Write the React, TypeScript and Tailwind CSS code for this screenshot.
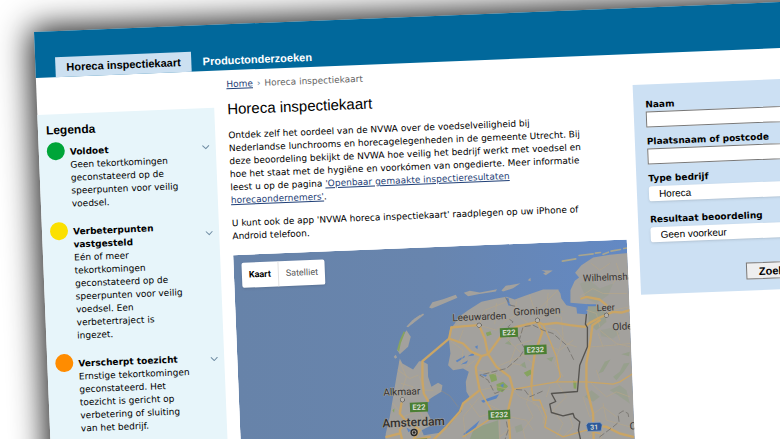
import { ChevronDown } from 'lucide-react';

const legend = [
  {
    title: 'Voldoet',
    dot: 'bg-[#00a539]',
    text: 'Geen tekortkomingen geconstateerd op de speerpunten voor veilig voedsel.'
  },
  {
    title: 'Verbeterpunten vastgesteld',
    dot: 'bg-[#fbe000]',
    text: 'Eén of meer tekortkomingen geconstateerd op de speerpunten voor veilig voedsel. Een verbetertraject is ingezet.'
  },
  {
    title: 'Verscherpt toezicht',
    dot: 'bg-[#ff8c00]',
    text: 'Ernstige tekortkomingen geconstateerd. Het toezicht is gericht op verbetering of sluiting van het bedrijf.'
  }
];

const places = [
  { name: 'Leeuwarden', x: 158, y: 273, size: 30, dot: [238, 285] },
  { name: 'Groningen', x: 341, y: 256, size: 31, dot: [413, 270] },
  { name: 'Alkmaar', x: -49, y: 497, size: 30, dot: [8, 509] },
  { name: 'Leer', x: 591, y: 243, size: 28, dot: [620, 255] },
  { name: 'Wilhelmshaven', x: 550, y: 154, size: 29 },
  { name: 'Oldenburg', x: 638, y: 300, size: 30 },
  { name: 'Cloppenburg', x: 690, y: 598, size: 30 }
];

const shields = [
  { name: 'E22', x: 300, y: 294, w: 54 },
  { name: 'E232', x: 373, y: 346, w: 67 },
  { name: 'E22', x: 30, y: 518, w: 54 },
  { name: 'E232', x: 265, y: 541, w: 66 }
];

const MapView = () => (
  <svg className="block h-full w-full" role="img" aria-label="Kaart van Noord-Nederland">
    <defs>
      <linearGradient id="sea" x1="0" x2="1">
        <stop offset="0" stopColor="#6783a9" />
        <stop offset="0.5" stopColor="#6885ae" />
        <stop offset="1" stopColor="#6389c4" />
      </linearGradient>
    </defs>
    <rect width="100%" height="100%" fill="url(#sea)" />
    <g transform="rotate(2.3) scale(0.3333) translate(500 -75)" strokeLinecap="round" strokeLinejoin="round">
      {/* land */}
      <g fill="#a3a19d">
        <path d="M148 335L150 300L165 280L175 262L205 240L245 215L290 205L320 200L345 208L380 195L430 178L475 178L482 190L485 205L500 225L530 232L532 250L562 253L565 222L512 218L512 180L525 152L538 142L526 128L545 105L580 82L630 74L690 68L760 60L760 700L-50 700L-42 610L-30 560L-20 500L-10 440L0 385L8 400L40 418L58 393L68 393L84 402L85 440L95 470L115 458L128 465L125 485L100 500L85 510L80 540L92 565L95 585L66 600L72 615L120 608L145 590L165 565L185 545L188 520L212 505L200 485L198 455L207 425L190 415L160 420L145 405L152 370Z" />
        <path d="M20 300L33 320L25 350L0 372L-7 360L5 325Z" />
        <path d="M20 290L45 265L70 250L73 254L46 275L25 291Z" />
        <path d="M88 232L98 216L130 207L168 194L173 203L120 225L96 235Z" />
        <path d="M192 188L210 182L240 187L292 177L288 184L235 192L205 198Z" />
        <path d="M305 181L318 167L362 159L340 174L310 184Z" />
        <path d="M384 150L392 143L393 153Z" />
        <path d="M425 120L459 121L438 135L430 130L438 126Z" />
        <path d="M-18 380L-12 374L-8 382L-14 386Z" />
        <path d="M20 290L38 270L62 253L58 262L38 280Z" />
      </g>
      <g fill="none" stroke="#a8a58e" strokeWidth="5">
        <path d="M488 93L528 86" />
        <path d="M538 76L580 71M587 69L602 67M610 72L626 66M634 63L662 58M672 55L700 51" />
      </g>
      {/* woods and parks */}
      <g fill="#929f86">
        <path d="M565 222L612 232L620 275L590 300L567 280Z" opacity="0.6" />
        <path d="M540 160L570 150L600 175L640 160L625 195L590 220L560 205Z" opacity="0.3" />
        <path d="M600 300L640 292L660 310L640 325L605 318Z" opacity="0.3" />
        <path d="M220 602L250 585L295 570L298 627L205 640Z" />
        <path d="M640 440L660 425L672 400L690 398L672 425L650 450Z" opacity="0.7" />
        <path d="M596 430L615 395L632 388L610 425ZM665 372L690 365L688 378Z" opacity="0.8" />
        <path d="M630 480L660 465L680 480L690 520L655 495Z" opacity="0.5" />
        <path d="M360 405L375 395L380 415ZM440 385L462 380L455 395ZM315 340L330 330L335 345Z" />
        <path d="M555 500L575 480L600 500L580 515ZM345 590L365 582L370 600L350 608Z" opacity="0.6" />
      </g>
      <g fill="#86a35f">
        <path d="M12 303L16 306L3 340L-2 365L-8 358L0 330Z" />
        <path d="M268 434L288 430L292 450L275 456ZM290 462L310 455L325 468L308 486L292 480Z" />
        <path d="M372 428L392 418L398 430L382 440ZM258 308L272 303L276 313L262 318Z" />
        <path d="M520 450L530 455L530 476L522 475ZM-22 540L-16 535L-17 548Z" />
      </g>
      {/* lakes */}
      <g fill="#5d85c0">
        <path d="M168 392L196 376L194 382L172 396ZM183 403L205 390L200 400ZM204 378L225 365L222 376ZM225 350L234 345L233 357Z" />
        <path d="M318 202L327 205L330 222L340 228L326 226ZM302 465L312 460L310 473ZM244 512L298 492L290 505L250 518Z" />
        <path d="M190 612L240 570L228 592L200 615ZM240 432L262 434L258 440ZM20 592L34 600L26 606ZM562 222L590 222L588 228L565 228Z" />
      </g>
      {/* secondary roads */}
      <g fill="none" stroke="#b5a68a" strokeWidth="2">
        <path d="M165 290L200 262L238 285L255 240L320 215M175 340L190 300M238 285L290 300L320 270L360 250L413 240L475 180" />
        <path d="M390 195L413 270L450 250L485 260L490 320L465 400L490 440" />
        <path d="M425 290L470 300L500 340L530 350M413 270L380 290L350 320L320 325L365 370L400 400" />
        <path d="M150 330L190 360L185 400M240 380L200 410M265 372L290 410L360 380L400 360M235 420L270 425L300 440L340 400L365 405" />
        <path d="M240 480L290 470L340 480M240 480L260 520L300 540L300 640M340 480L360 500L410 520L440 580" />
        <path d="M395 470L380 520L400 560L370 600L380 640M470 455L500 500L460 540L490 580L470 620" />
        <path d="M290 220L285 280M350 215L345 250L400 290M205 250L230 270M445 190L440 240L490 245" />
        <path d="M395 330L350 345L330 400M430 340L480 360L520 330M240 500L190 560L200 640M210 520L240 560L290 545" />
        <path d="M-5 420L30 445L55 435M5 460L40 470L25 490M0 395L20 440L0 500M-20 520L10 560L60 540L75 580M60 440L70 480L100 480" />
        <path d="M600 300L650 340L690 350M575 350L640 345L690 340M600 450L590 420M610 350L595 310M640 160L660 130L650 100M560 240L590 250L600 290" />
        <path d="M575 460L620 500L650 485L690 500M550 500L570 560L610 530L650 560M600 570L570 620M610 520L620 570L690 590M610 590L600 640" />
        <path d="M630 100L600 120L575 100M540 200L580 175L610 190L680 190M640 240L690 230M660 330L650 300" />
        <path d="M440 500L450 470M400 520L440 540L430 580M510 560L520 590L490 620M330 560L380 570L400 600M340 590L300 620" />
        <path d="M125 482L150 497L175 530" stroke="#8d8b88" />
      </g>
      {/* main roads */}
      <g fill="none" stroke="#c9a566" strokeWidth="7">
        <path d="M155 292L195 288L238 285L255 325L265 372L290 410L330 440L340 478L325 540L332 640" />
        <path d="M155 292L148 325L68 393L68 450L72 490L85 512" />
        <path d="M148 325L190 340L215 365L245 378L265 372L310 310L350 290L413 275L430 283L470 278L510 285L555 290L570 278L600 262L640 245L665 247L690 240" />
        <path d="M245 378L228 410L230 430L240 480L190 520L180 545L140 590L90 640" />
        <path d="M340 478L395 468L470 455L560 455L640 462L660 455L700 430" strokeWidth="4" />
        <path d="M413 275L428 305L405 370L398 420L395 468" />
        <path d="M430 283L450 330L470 380L482 440L470 455M420 510L440 560L435 590L490 620L560 600L600 610" strokeWidth="4" />
        <path d="M600 270L578 285L572 330L560 400L560 470L580 550L582 640M582 585L620 590L660 610L700 620" />
        <path d="M545 205L560 200L600 208L620 225M10 640L0 600L20 570L60 600L40 630L90 620M5 520L0 550L20 575M-40 620L0 610" />
        <path d="M395 468L400 510L420 510M240 480L275 540L280 560L190 620" strokeWidth="4" />
      </g>
      {/* borders */}
      <path d="M560 253L557 282L563 292L563 350L540 405L533 484L455 490L468 514L450 522L455 547L490 557L520 550L524 562L540 575L536 600L545 640" fill="none" stroke="#55534f" strokeWidth="4" />
      <path d="M318 203L332 225L345 228M330 268L340 275L325 290L360 325L370 290L400 285L430 300L460 310L500 345L525 395M355 322L375 355L360 380L320 415L280 425L240 435L265 450L285 490L310 480M350 478L375 480L390 500L435 480M320 575L325 600L312 640" fill="none" stroke="#7d7a75" strokeWidth="3" strokeDasharray="16 9" />
      <path d="M600 620L640 590L658 575L655 552L670 542L685 550L688 568" fill="none" stroke="#7d7a75" strokeWidth="3" strokeDasharray="16 9" />

      {/* road numbers */}
      <g fontFamily="Roboto, sans-serif" fontWeight="700" textAnchor="middle" fill="#d9ddd2">
        {shields.map((shield, idx) => (
          <g key={idx} transform={`translate(${shield.x} ${shield.y}) rotate(-2.3)`}>
            <rect width={shield.w} height="28" fill="#4a7f34" />
            <text x={shield.w / 2} y="22" fontSize="23">{shield.name}</text>
          </g>
        ))}
        <path d="M28 627L82 625L82 650L28 650Z" fill="#4a7f34" />
        <g transform="translate(559 578) rotate(-2.3)">
          <path d="M6 0L42 0L48 8L44 26L4 26L0 8Z" fill="#2d5a9b" stroke="#8fa3c0" strokeWidth="2" />
          <text x="24" y="21" fontSize="21">31</text>
        </g>
      </g>

      {/* places */}
      <g fontFamily="Roboto, sans-serif" fill="#33312f" stroke="#aaa6a0" strokeWidth="3" paintOrder="stroke">
        {places.map((place) => (
          <g key={place.name}>
            {place.dot && <circle cx={place.dot[0]} cy={place.dot[1]} r="6" fill="#b5b2ad" stroke="#44423f" />}
            <text fontSize={place.size} transform={`translate(${place.x} ${place.y}) rotate(-2.3)`}>{place.name}</text>
          </g>
        ))}
        <text fontSize="36" fontWeight="500" transform="translate(-52 592) rotate(-2.3)">Amsterdam</text>
      </g>
      <circle cx="43" cy="607" r="9" fill="#aaa6a0" stroke="#282725" strokeWidth="4" />
      <circle cx="43" cy="607" r="4" fill="#282725" />
    </g>
  </svg>
);

const Header = () => (
  <header className="flex h-[46px] items-end bg-[#01689b] pl-5">
    <nav className="flex font-['Liberation_Sans',sans-serif] text-[11px] font-bold leading-5">
      <a href="#kaart" className="bg-[#cce0f1] px-[11px] text-black">Horeca inspectiekaart</a>
      <a href="#producten" className="px-[11px] text-white">Productonderzoeken</a>
    </nav>
  </header>
);

const Legend = () => (
  <aside className="mt-[37px] w-[177px] shrink-0 bg-[#e7f5fa] pl-2 pr-1 pt-2">
    <h2 className="mb-1 font-['Liberation_Sans',sans-serif] text-[12px] font-bold leading-4">Legenda</h2>
    <ul className="flex flex-col gap-[11px]">
      {legend.map((item) => (
        <li key={item.title} className="flex items-start">
          <span className={`mr-[5px] size-[18px] shrink-0 rounded-full ${item.dot}`} />
          <div className="flex-1 pt-1">
            <div className="flex items-center justify-between">
              <h3 className="w-[112px] font-bold">{item.title}</h3>
              <button className="text-[#6f8ca3]" aria-label={`Meer over ${item.title}`}>
                <ChevronDown size={12} />
              </button>
            </div>
            <p className="w-[114px]">{item.text}</p>
          </div>
        </li>
      ))}
    </ul>
  </aside>
);

const SearchForm = () => (
  <form className="mt-[31px] flex h-[210px] flex-1 flex-col bg-[#cce0f3] px-3 pt-[14px] font-bold">
    <label htmlFor="naam">Naam</label>
    <input id="naam" className="mb-2 h-4 border border-[#777] bg-white" />
    <label htmlFor="plaats">Plaatsnaam of postcode</label>
    <input id="plaats" className="mb-2 h-4 border border-[#777] bg-white" />
    <label htmlFor="type">Type bedrijf</label>
    <select id="type" className="mb-3 mt-[1px] h-[15px] appearance-none rounded-[3px] bg-white px-[10px] font-['Liberation_Sans',sans-serif] text-[10px] font-normal leading-[15px] shadow-sm">
      <option>Horeca</option>
    </select>
    <label htmlFor="resultaat">Resultaat beoordeling</label>
    <select id="resultaat" className="mt-[1px] h-[15px] appearance-none rounded-[3px] bg-white px-[10px] font-['Liberation_Sans',sans-serif] text-[10px] font-normal leading-[15px] shadow-sm">
      <option>Geen voorkeur</option>
    </select>
    <button type="button" className="ml-[94px] mt-6 h-[17px] w-16 border border-[#777] bg-[#efefef] font-['Liberation_Sans',sans-serif] text-[11px] font-bold leading-[14px]">
      Zoeken
    </button>
  </form>
);

export default function App() {
  return (
    <div className="h-screen overflow-hidden bg-white pl-[34px] pt-8 font-['DejaVu_Sans',sans-serif] text-[9px] leading-[13px] text-black">
      <div className="w-[calc(100%+80px)] origin-top-left rotate-[-2.3deg] bg-white shadow-[0_0_32px_4px_rgba(0,0,0,0.9)]">
        <Header />
        <div className="flex min-h-[460px]">
          <Legend />
          <main className="ml-[13px] w-[394px] shrink-0 pt-2">
            <nav className="text-[#666]">
              <a href="#home" className="text-[#1f3f77] underline">Home</a>
              <span className="mx-1 text-[#6f8ca3]">›</span>
              Horeca inspectiekaart
            </nav>
            <h1 className="mb-[10px] mt-2 font-['Liberation_Sans',sans-serif] text-[15px] leading-5">Horeca inspectiekaart</h1>
            <p className="mb-[10px] w-[360px]">
              Ontdek zelf het oordeel van de NVWA over de voedselveiligheid bij Nederlandse lunchrooms en
              horecagelegenheden in de gemeente Utrecht. Bij deze beoordeling bekijkt de NVWA hoe veilig het bedrijf
              werkt met voedsel en hoe het staat met de hygiëne en voorkómen van ongedierte. Meer informatie leest u op
              de pagina{' '}
              <a href="#resultaten" className="text-[#1f3f77] underline">
                'Openbaar gemaakte inspectieresultaten horecaondernemers'
              </a>.
            </p>
            <p className="mb-3 w-[360px]">
              U kunt ook de app 'NVWA horeca inspectiekaart' raadplegen op uw iPhone of Android telefoon.
            </p>
            <div className="relative h-[260px] overflow-hidden">
              <MapView />
              <div className="absolute left-2 top-2 flex h-[25px] rounded-[2px] bg-white font-['Roboto',sans-serif] text-[9px] shadow">
                <button className="border-r border-[#e3e3e3] px-[7px] font-bold">Kaart</button>
                <button className="px-[7px] text-[#565656]">Satelliet</button>
              </div>
            </div>
          </main>
          <div className="flex flex-1 pl-3">
            <SearchForm />
          </div>
        </div>
      </div>
    </div>
  );
}
